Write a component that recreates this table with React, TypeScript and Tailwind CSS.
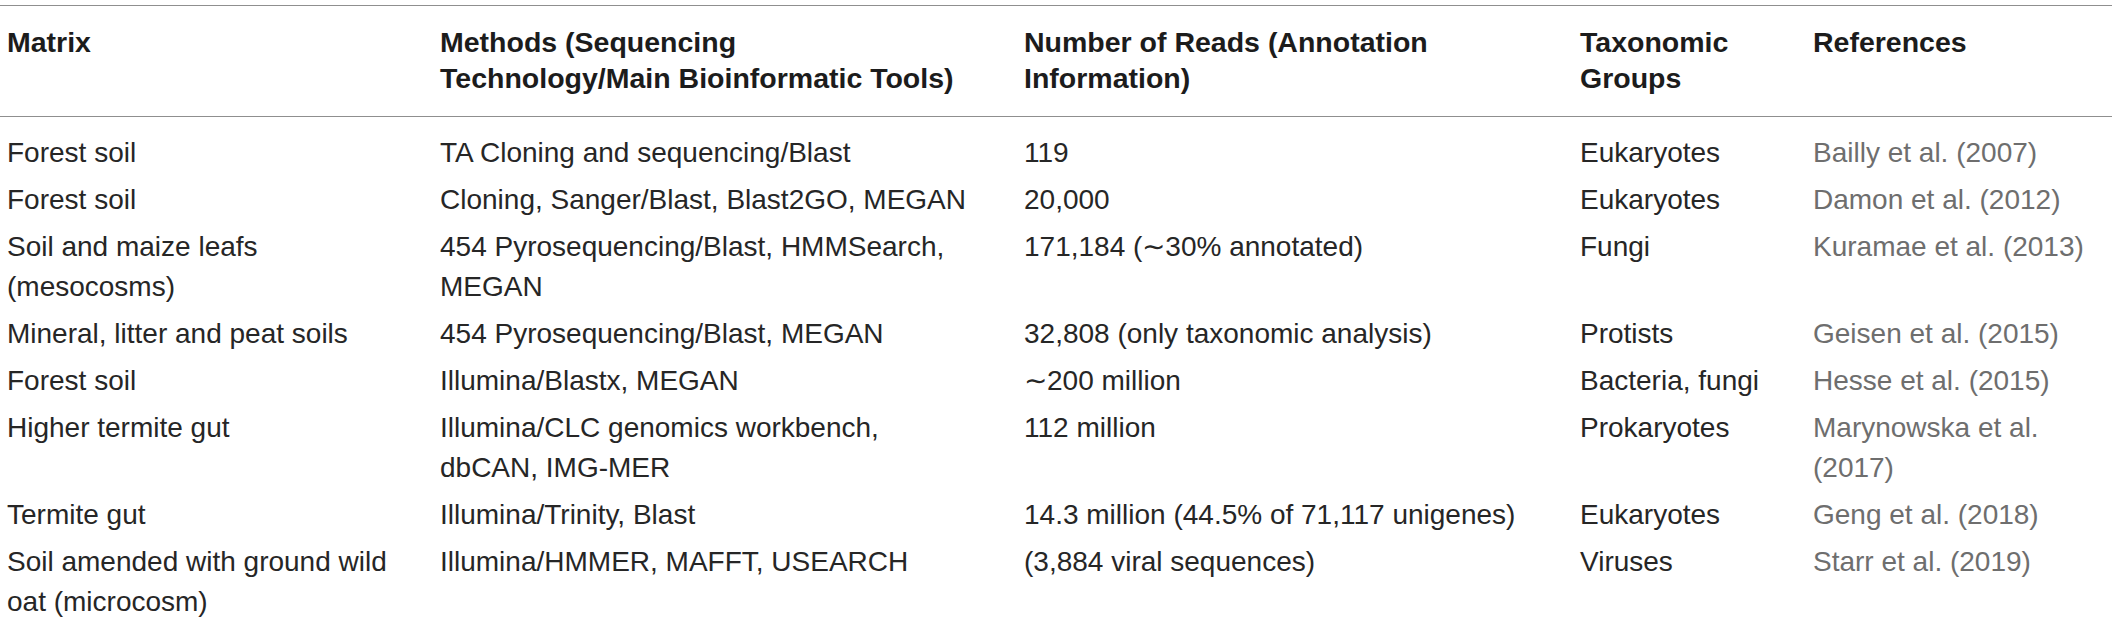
import React from "react";

type Row = {
  matrix: React.ReactNode;
  method: React.ReactNode;
  reads: React.ReactNode;
  taxa: React.ReactNode;
  ref: React.ReactNode;
};

const rows: Row[] = [
  {
    matrix: "Forest soil",
    method: "TA Cloning and sequencing/Blast",
    reads: "119",
    taxa: "Eukaryotes",
    ref: "Bailly et al. (2007)",
  },
  {
    matrix: "Forest soil",
    method: "Cloning, Sanger/Blast, Blast2GO, MEGAN",
    reads: "20,000",
    taxa: "Eukaryotes",
    ref: "Damon et al. (2012)",
  },
  {
    matrix: (
      <>
        Soil and maize leafs
        <br />
        (mesocosms)
      </>
    ),
    method: (
      <>
        454 Pyrosequencing/Blast, HMMSearch,
        <br />
        MEGAN
      </>
    ),
    reads: "171,184 (\u223C30% annotated)",
    taxa: "Fungi",
    ref: "Kuramae et al. (2013)",
  },
  {
    matrix: "Mineral, litter and peat soils",
    method: "454 Pyrosequencing/Blast, MEGAN",
    reads: "32,808 (only taxonomic analysis)",
    taxa: "Protists",
    ref: "Geisen et al. (2015)",
  },
  {
    matrix: "Forest soil",
    method: "Illumina/Blastx, MEGAN",
    reads: "\u223C200 million",
    taxa: "Bacteria, fungi",
    ref: "Hesse et al. (2015)",
  },
  {
    matrix: "Higher termite gut",
    method: (
      <>
        Illumina/CLC genomics workbench,
        <br />
        dbCAN, IMG-MER
      </>
    ),
    reads: "112 million",
    taxa: "Prokaryotes",
    ref: (
      <>
        Marynowska et al.
        <br />
        (2017)
      </>
    ),
  },
  {
    matrix: "Termite gut",
    method: "Illumina/Trinity, Blast",
    reads: "14.3 million (44.5% of 71,117 unigenes)",
    taxa: "Eukaryotes",
    ref: "Geng et al. (2018)",
  },
  {
    matrix: (
      <>
        Soil amended with ground wild
        <br />
        oat (microcosm)
      </>
    ),
    method: "Illumina/HMMER, MAFFT, USEARCH",
    reads: "(3,884 viral sequences)",
    taxa: "Viruses",
    ref: "Starr et al. (2019)",
  },
];

export default function App() {
  const font = { fontFamily: '"Liberation Sans", Arial, Helvetica, sans-serif' };
  return (
    <div className="w-[2118px] h-[622px] overflow-hidden bg-white pt-[5px]" style={font}>
      <table className="table-fixed w-[2112px] border-collapse">
        <colgroup>
          <col className="w-[433px]" />
          <col className="w-[584px]" />
          <col className="w-[556px]" />
          <col className="w-[233px]" />
          <col className="w-[306px]" />
        </colgroup>
        <thead>
          <tr className="border-t border-b border-[#8f8f8f] text-[28.5px] leading-[36px] font-bold text-[#1c1c1c]">
            <th className="text-left align-top pl-[7px] pt-[18px] pb-[20px] whitespace-nowrap font-bold">Matrix</th>
            <th className="text-left align-top pl-[7px] pt-[18px] pb-[20px] whitespace-nowrap font-bold">
              Methods (Sequencing
              <br />
              Technology/Main Bioinformatic Tools)
            </th>
            <th className="text-left align-top pl-[7px] pt-[18px] pb-[20px] whitespace-nowrap font-bold">
              Number of Reads (Annotation
              <br />
              Information)
            </th>
            <th className="text-left align-top pl-[7px] pt-[18px] pb-[20px] whitespace-nowrap font-bold">
              Taxonomic
              <br />
              Groups
            </th>
            <th className="text-left align-top pl-[7px] pt-[18px] pb-[20px] whitespace-nowrap font-bold">References</th>
          </tr>
        </thead>
        <tbody className="text-[28px] leading-[40px] text-[#262626]">
          {rows.map((r, i) => {
            const pad = i === 0 ? "pt-[16px] pb-[3px]" : "pt-[4px] pb-[3px]";
            return (
              <tr key={i}>
                <td className={`align-top pl-[7px] whitespace-nowrap ${pad}`}>{r.matrix}</td>
                <td className={`align-top pl-[7px] whitespace-nowrap ${pad}`}>{r.method}</td>
                <td className={`align-top pl-[7px] whitespace-nowrap ${pad}`}>{r.reads}</td>
                <td className={`align-top pl-[7px] whitespace-nowrap ${pad}`}>{r.taxa}</td>
                <td className={`align-top pl-[7px] whitespace-nowrap text-[#6e6e6e] ${pad}`}>{r.ref}</td>
              </tr>
            );
          })}
        </tbody>
      </table>
    </div>
  );
}
